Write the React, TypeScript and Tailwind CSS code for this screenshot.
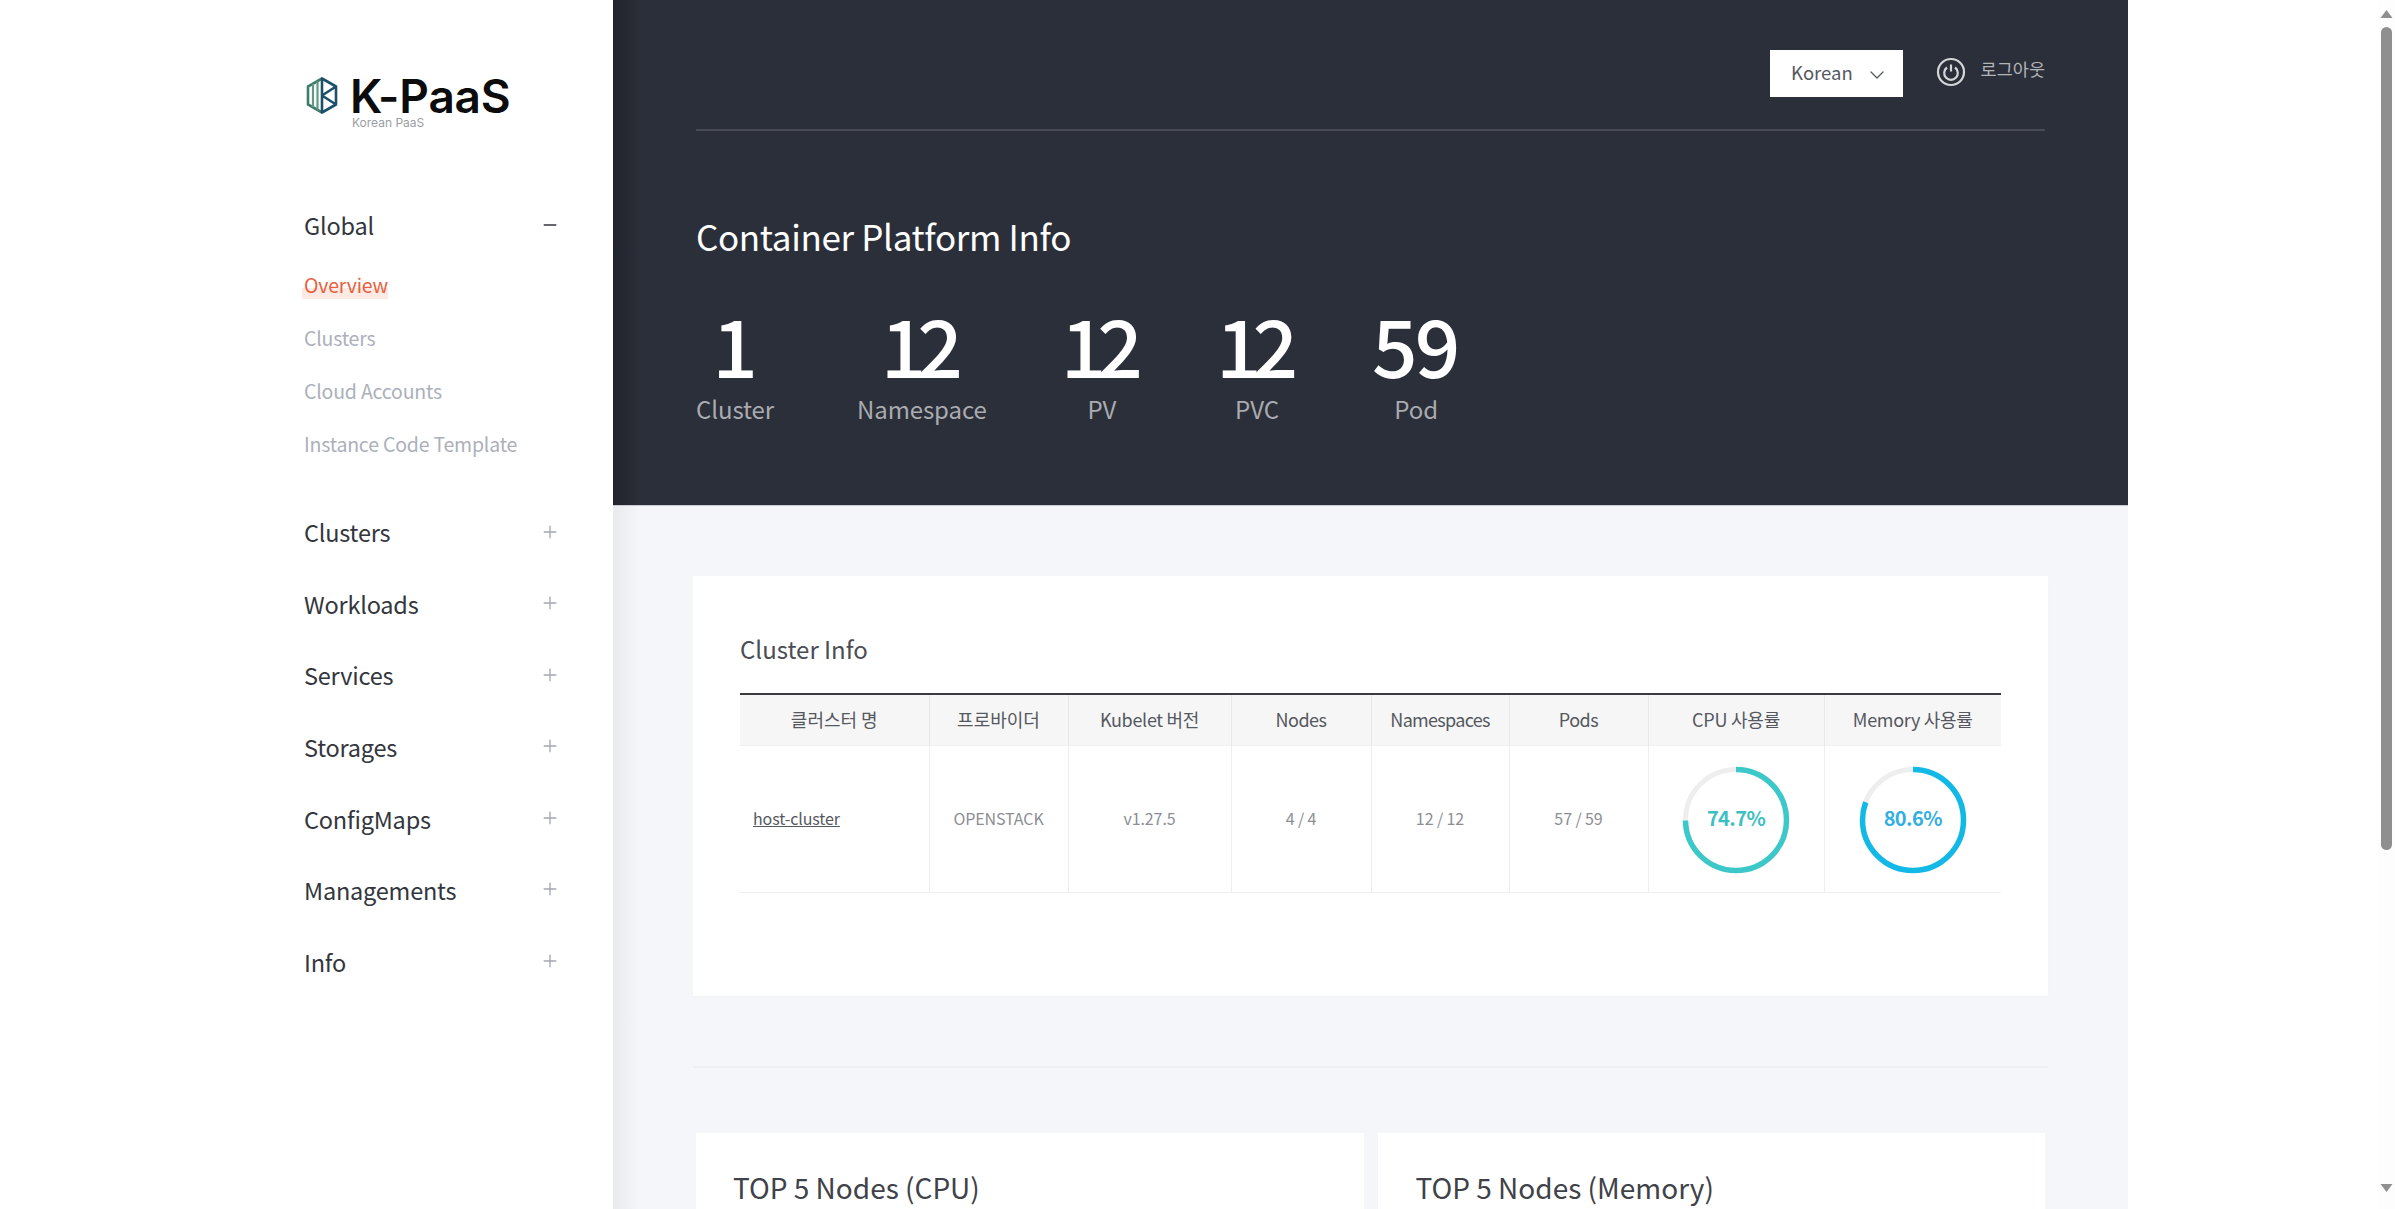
import React from "react";
import { Minus, Plus, ChevronDown } from "lucide-react";

const stats = [
  { value: "1", label: "Cluster", track: "", gap: "" },
  { value: "12", label: "Namespace", track: "tracking-[-9px] pr-[9px]", gap: "ml-[7px]" },
  { value: "12", label: "PV", track: "tracking-[-9px] pr-[9px]", gap: "-ml-[2px]" },
  { value: "12", label: "PVC", track: "tracking-[-9px] pr-[9px]", gap: "-ml-[3px]" },
  { value: "59", label: "Pod", track: "tracking-[-3px] pr-[3px]", gap: "-ml-[2px]" },
];

const subMenu = ["Clusters", "Cloud Accounts", "Instance Code Template"];
const menu = ["Clusters", "Workloads", "Services", "Storages", "ConfigMaps", "Managements", "Info"];
const columns = [
  { name: "클러스터 명", className: "w-[189px]" },
  { name: "프로바이더", className: "w-[139px]" },
  { name: "Kubelet 버전", className: "w-[163px] tracking-[-0.3px]" },
  { name: "Nodes", className: "w-[140px] tracking-[-0.5px]" },
  { name: "Namespaces", className: "w-[138px] tracking-[-0.7px]" },
  { name: "Pods", className: "w-[139px] tracking-[-0.5px]" },
  { name: "CPU 사용률", className: "w-[176px] tracking-[-0.2px]" },
  { name: "Memory 사용률", className: "w-[177px] tracking-[-0.3px]" },
];

const Logo = () => (
  <div className="flex items-start">
    <svg width="33" height="37" viewBox="0 0 33 37" fill="none" className="mt-[1px] ml-[2px]">
      <path d="M16 1.5 2 9.5v18l14 8" stroke="#3f7d68" strokeWidth="2.6" />
      <path d="M7 7v23M11.5 4.5v28" stroke="#5f9a84" strokeWidth="2.2" />
      <path d="M16 1.5l14 8v18l-14 8zM30 9.5 16 18.5l14 9" stroke="#1d4f6b" strokeWidth="2.6" strokeLinejoin="round" />
    </svg>
    <div className="ml-[11px] flex flex-col">
      <span className="font-['Inter',sans-serif] text-[46px] leading-[40px] font-semibold tracking-[-0.2px] text-[#0c0c0c]">K-PaaS</span>
      <span className="font-['Inter',sans-serif] text-[12px] leading-[14px] ml-[2px] text-[#9a9da3]">Korean PaaS</span>
    </div>
  </div>
);

const Ring = ({ pct, stroke, text }: { pct: number; stroke: string; text: string }) => {
  const r = 50.5;
  const c = 2 * Math.PI * r;
  return (
    <div className="relative mx-auto w-[108px] h-[108px]">
      <svg width="108" height="108" viewBox="0 0 108 108">
        <circle cx="54" cy="54" r={r} fill="none" stroke="#eeeeee" strokeWidth="5" />
        <circle
          cx="54"
          cy="54"
          r={r}
          fill="none"
          stroke={stroke}
          strokeWidth="5.5"
          strokeDasharray={`${(c * pct) / 100} ${c}`}
          transform="rotate(-90 54 54)"
        />
      </svg>
      <span className={`absolute inset-0 flex items-center justify-center pb-[4px] text-[20px] font-semibold tracking-[-0.6px] ${text}`}>
        {pct}%
      </span>
    </div>
  );
};

const Scrollbar = () => (
  <div className="w-[17px] shrink-0 bg-[#fdfdfd] flex flex-col items-center h-full">
    <svg width="13" height="8" viewBox="0 0 12 8" className="mt-[10px] shrink-0">
      <path d="M6 0l6 8H0z" fill="#8f8f8f" />
    </svg>
    <div className="mt-[9px] w-[11px] h-[823px] rounded-full bg-[#8f8f8f] shrink-0" />
    <div className="flex-1" />
    <svg width="13" height="8" viewBox="0 0 12 8" className="mb-[17px] shrink-0">
      <path d="M6 8l6-8H0z" fill="#8f8f8f" />
    </svg>
  </div>
);

export default function App() {
  return (
    <div className="flex h-screen w-full overflow-hidden bg-white font-['Noto_Sans_CJK_KR','Noto_Sans',sans-serif]">
      <aside className="w-[613px] shrink-0 pl-[304px] pr-[56px] pt-[76px]">
        <Logo />
        <div className="mt-[78px] flex items-center justify-between h-[36px]">
          <span className="text-[23.5px] tracking-[-0.2px] text-[#33363d]">Global</span>
          <Minus size={20} strokeWidth={1.6} className="text-[#33363d] -mr-[3px] -mt-[3px]" />
        </div>
        <ul className="mt-[25px] flex flex-col gap-[21px] text-[19.5px] tracking-[-0.2px] leading-[32px] text-[#abb0ba]">
          <li>
            <span className="text-[#e8603c] bg-[linear-gradient(transparent_62%,#fdeae5_62%)] -ml-[2px] pl-[2px]">Overview</span>
          </li>
          {subMenu.map((item) => (
            <li key={item}>{item}</li>
          ))}
        </ul>
        <ul className="mt-[55px] flex flex-col gap-[35.55px]">
          {menu.map((item) => (
            <li key={item} className="flex items-center justify-between h-[36px] text-[23.5px] tracking-[-0.2px] text-[#33363d]">
              {item}
              <Plus size={20} strokeWidth={1.6} className="text-[#a3a7af] -mr-[3px] -mt-[3px]" />
            </li>
          ))}
        </ul>
      </aside>

      <main className="w-[1515px] shrink-0 bg-[#f5f6fa]">
        <section className="relative h-[506px] bg-[#2b2f39] px-[83px] border-b border-[#c8cad0]">
          <div className="absolute left-0 top-0 h-full w-[28px] bg-linear-to-r from-black/25 to-transparent" />
          <div className="h-[131px] border-b-2 border-[#484b54] flex justify-end items-start pt-[50px]">
            <button className="w-[133px] h-[47px] bg-white flex items-center justify-between pl-[21px] pr-[14px] pb-[2px] text-[18.5px] text-[#555860]">
              Korean
              <ChevronDown size={24} strokeWidth={1.3} className="mt-[4px]" />
            </button>
            <div className="ml-[34px] flex items-center gap-[14.5px] mt-[1px]">
              <svg width="30" height="30" viewBox="0 0 30 30" fill="none" stroke="#d5d6d9" className="mt-[6px] -ml-[1px]">
                <circle cx="15" cy="15" r="13" strokeWidth="2.2" />
                <path d="M11 10.5a6.8 6.8 0 1 0 8 0M15 7.5v7" strokeWidth="2.2" />
              </svg>
              <span className="text-[17.5px] leading-[26px] text-[#b2b4b9]">로그아웃</span>
            </div>
          </div>
          <h1 className="mt-[81px] text-[35px] leading-[48px] tracking-[-0.35px] text-white">Container Platform Info</h1>
          <div className="mt-[43px] flex gap-[76px]">
            {stats.map((s) => (
              <div key={s.label} className={`flex flex-col items-center ${s.gap}`}>
                <span className={`text-[80px] leading-[80px] font-medium text-white ${s.track}`}>{s.value}</span>
                <span className="mt-[10px] text-[24px] leading-[32px] tracking-[-0.1px] text-[#a9abb0]">{s.label}</span>
              </div>
            ))}
          </div>
        </section>

        <div className="relative px-[80px] pt-[70px]">
          <div className="absolute left-0 top-0 h-full w-[28px] bg-linear-to-r from-black/5 to-transparent" />
          <section className="h-[420px] bg-white px-[47px] pt-[53px] shadow-[0_1px_2px_rgba(0,0,0,0.02)]">
            <h2 className="text-[24px] leading-[40px] text-[#4a4d54]">Cluster Info</h2>
            <table className="mt-[24px] w-[1261px] table-fixed border-collapse border-t-2 border-[#3a3c42] text-[#8b8e95]">
              <thead>
                <tr className="h-[51px] bg-[#f6f6f6] border-b border-[#f0f0f0]">
                  {columns.map((col, i) => (
                    <th
                      key={col.name}
                      className={`${col.className} ${i > 0 ? "border-l border-[#e8e8e8]" : ""} text-[18px] font-normal text-[#55585f]`}
                    >
                      {col.name}
                    </th>
                  ))}
                </tr>
              </thead>
              <tbody>
                <tr className="h-[147px] border-b border-[#efefef] text-[16px] tracking-[-0.1px] text-center">
                  <td className="pl-[13px] pb-[2px] text-left">
                    <a className="underline text-[#55585f]">host-cluster</a>
                  </td>
                  <td className="pb-[2px] border-l border-[#eeeeee]">OPENSTACK</td>
                  <td className="pb-[2px] border-l border-[#eeeeee]">v1.27.5</td>
                  <td className="pb-[2px] border-l border-[#eeeeee]">4 / 4</td>
                  <td className="pb-[2px] border-l border-[#eeeeee]">12 / 12</td>
                  <td className="pb-[2px] border-l border-[#eeeeee]">57 / 59</td>
                  <td className="pt-[2px] border-l border-[#eeeeee]">
                    <Ring pct={74.7} stroke="#3cc8c8" text="text-[#3cbfc2]" />
                  </td>
                  <td className="pt-[2px] border-l border-[#eeeeee]">
                    <Ring pct={80.6} stroke="#12b9e6" text="text-[#33aee2]" />
                  </td>
                </tr>
              </tbody>
            </table>
          </section>

          <div className="mt-[70px] h-[2px] bg-[#eeeff3]" />

          <div className="mt-[65px] mx-[3px] grid grid-cols-2 gap-[14px]">
            <section className="h-[200px] bg-white px-[37px] pt-[34px]">
              <h2 className="text-[28px] leading-[40px] text-[#3f4248]">TOP 5 Nodes (CPU)</h2>
            </section>
            <section className="h-[200px] bg-white px-[38px] pt-[34px]">
              <h2 className="text-[28px] leading-[40px] text-[#3f4248]">TOP 5 Nodes (Memory)</h2>
            </section>
          </div>
        </div>
      </main>

      <div className="flex-1" />
      <Scrollbar />
    </div>
  );
}
